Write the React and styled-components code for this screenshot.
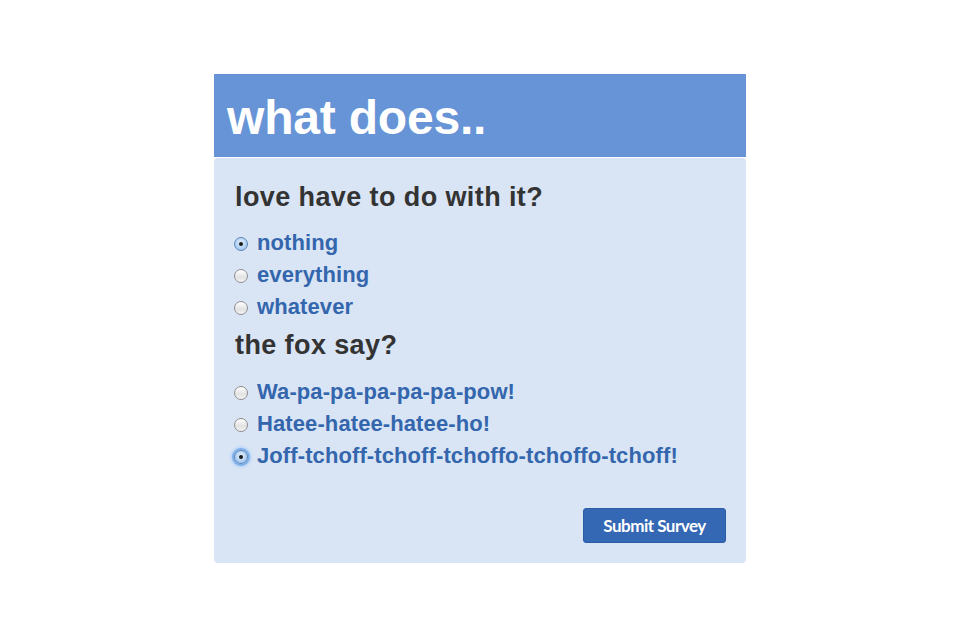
import React from "react";
import styled, { createGlobalStyle } from "styled-components";

const GlobalStyle = createGlobalStyle`
  body {
    margin: 0;
    background: #fff;
    font-family: "Liberation Sans", Arial, Helvetica, sans-serif;
  }
`;

const Page = styled.div`
  padding-top: 74px;
  display: flex;
  justify-content: center;
`;

const Card = styled.form`
  width: 532px;
  display: flex;
  flex-direction: column;
`;

const Banner = styled.h1`
  margin: 0;
  height: 83px;
  box-sizing: border-box;
  padding: 15px 13px 0;
  background: #6794d6;
  color: #fff;
  font-size: 48px;
  font-weight: bold;
  line-height: 1.2;
  letter-spacing: -0.2px;
`;

const Body = styled.div`
  margin-top: 1px;
  background: #d9e5f5;
  border-radius: 4px;
  padding: 23px 20px 20px 21px;
  display: flex;
  flex-direction: column;
`;

const Question = styled.h2`
  margin: ${(p) => (p.$first ? "0 0 14px" : "6px 0 14px")};
  color: #333;
  font-size: 27px;
  font-weight: bold;
  line-height: 1.2;
  letter-spacing: 0.4px;
`;

const Options = styled.div`
  display: flex;
  flex-direction: column;
  margin-left: -2px;
`;

const Option = styled.label`
  display: flex;
  align-items: center;
  gap: 9px;
  height: 32px;
  color: #3466ad;
  font-size: 22px;
  font-weight: bold;
  letter-spacing: 0.1px;
  cursor: pointer;
`;

const Radio = styled.input.attrs({ type: "radio" })`
  appearance: none;
  margin: 2px 0 0 1px;
  width: 14px;
  height: 14px;
  flex: none;
  border-radius: 50%;
  border: 1px solid #8e8e8e;
  box-sizing: border-box;
  background: linear-gradient(#ffffff, #e2e2e2 60%, #f4f4f4);
  position: relative;
  box-shadow: ${(p) => (p.$focus ? "0 0 0 2px #7fb0ea, 0 0 3px 3px #a9cdf5" : "none")};
  &:checked {
    border-color: #5f85b8;
    background: radial-gradient(circle at 50% 40%, #e6f1fd, #9cc4ef 80%);
  }
  &:checked::after {
    content: "";
    position: absolute;
    left: 50%;
    top: 50%;
    width: 4px;
    height: 4px;
    margin: -2px 0 0 -2px;
    border-radius: 50%;
    background: #1b1b1b;
  }
`;

const Footer = styled.div`
  display: flex;
  justify-content: flex-end;
  margin-top: 36px;
`;

const SubmitButton = styled.button`
  width: 143px;
  height: 35px;
  border: 1px solid #2c5ea6;
  border-radius: 3px;
  background: #3467b4;
  color: #fff;
  font-family: Lato, "Liberation Sans", sans-serif;
  font-weight: bold;
  font-size: 17px;
  letter-spacing: -0.5px;
  cursor: pointer;
`;

const questions = [
  {
    name: "love",
    title: "love have to do with it?",
    options: ["nothing", "everything", "whatever"],
    checked: 0,
  },
  {
    name: "fox",
    title: "the fox say?",
    options: [
      "Wa-pa-pa-pa-pa-pa-pow!",
      "Hatee-hatee-hatee-ho!",
      "Joff-tchoff-tchoff-tchoffo-tchoffo-tchoff!",
    ],
    checked: 2,
    focus: true,
  },
];

export default function App() {
  return (
    <>
      <GlobalStyle />
      <Page>
        <Card onSubmit={(e) => e.preventDefault()}>
          <Banner>what does..</Banner>
          <Body>
            {questions.map((q, qi) => (
              <React.Fragment key={q.name}>
                <Question $first={qi === 0}>{q.title}</Question>
                <Options>
                  {q.options.map((o, i) => (
                    <Option key={o}>
                      <Radio
                        name={q.name}
                        defaultChecked={i === q.checked}
                        $focus={q.focus && i === q.checked}
                      />
                      {o}
                    </Option>
                  ))}
                </Options>
              </React.Fragment>
            ))}
            <Footer>
              <SubmitButton type="submit">Submit Survey</SubmitButton>
            </Footer>
          </Body>
        </Card>
      </Page>
    </>
  );
}
